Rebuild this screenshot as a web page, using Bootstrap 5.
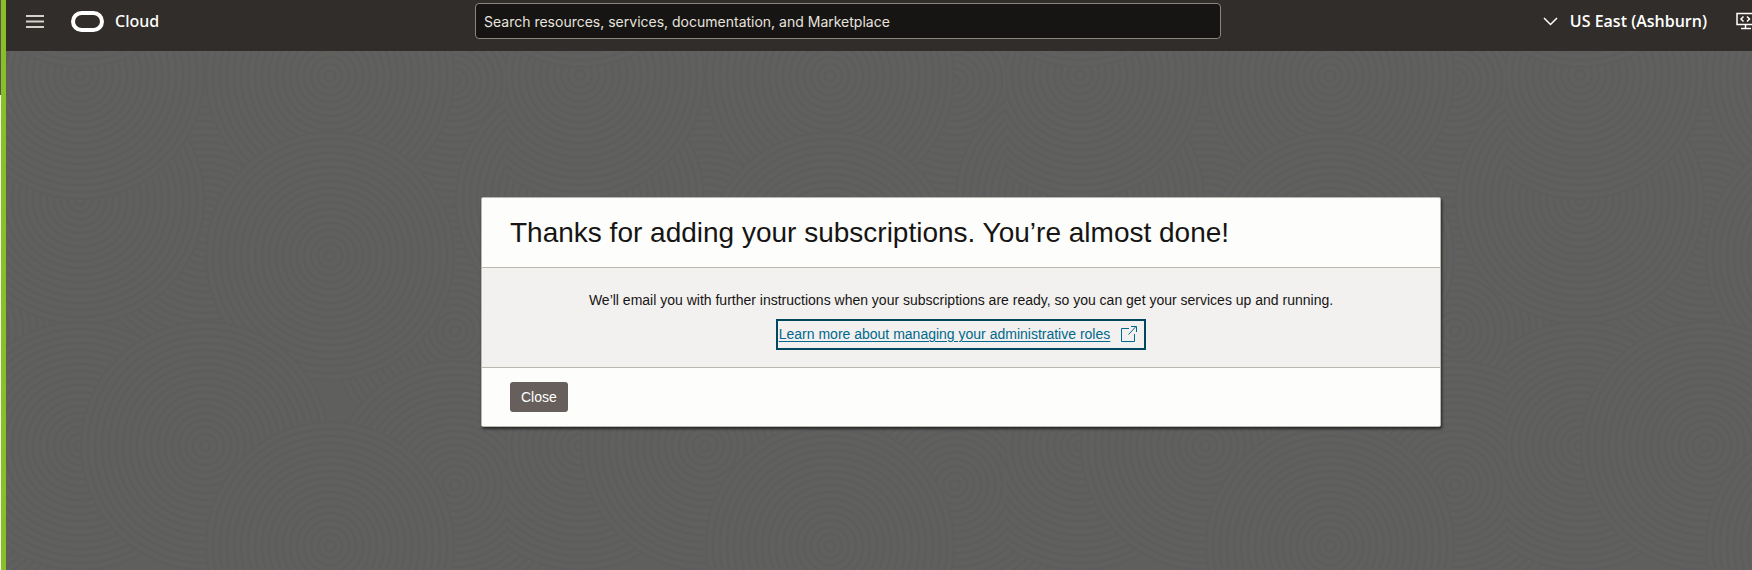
<!DOCTYPE html>
<html lang="en">
<head>
<meta charset="utf-8">
<meta name="viewport" content="width=device-width, initial-scale=1">
<title>Cloud</title>
<link href="https://cdn.jsdelivr.net/npm/bootstrap@5.3.0/dist/css/bootstrap.min.css" rel="stylesheet">
<style>
  body { font-family: "Liberation Sans", Arial, sans-serif; font-size: 14px; line-height: 20px; color: #161513; background: #605f5e; }
  .edge-strip { width: 6px; background: linear-gradient(90deg, transparent 1px, #8abf26 1px), linear-gradient(#55535a 95px, #f4f2f5 95px); }
  .console { min-width: 0; }
  .topbar { height: 51px; padding-bottom: 9px; background: #312d2a; display: grid; grid-template-columns: 469fr 746fr 531fr; font-family: "Noto Sans", sans-serif; font-size: 16px; color: #fff; }
  .topbar button { color: inherit; background: none; border: 0; padding: 0; }
  .brand-area { padding-left: 20px; gap: 27px; }
  .brand { color: #fff; font-weight: 500; gap: 11px; }
  .search { height: 36px; padding: 0 8px; font: 400 14px/20px Inter, sans-serif; color: #e6e3df; background: #161513; border: 1px solid #8b8580; border-radius: 4px; }
  .search::placeholder { color: #e6e3df; opacity: 1; }
  .search:focus { color: #fff; background: #161513; }
  .region { font-family: "Open Sans", sans-serif; font-weight: 600; gap: 12px; }
  .tools-area { gap: 29px; }
  .stage { padding: 146px 0 40px; display: grid; grid-template-columns: 475fr minmax(0, 960px) 311fr; isolation: isolate; }
  .backdrop-art { z-index: -1; }
  .dialog { grid-column: 2; background: #fdfdfc; border: 1px solid #bcb6b1; border-radius: 2px; box-shadow: 1px 2px 3px rgba(0,0,0,.6); }
  .dialog-head { padding: 16px 28px; border-bottom: 1px solid #bcb6b1; }
  .dialog-head h1 { font-size: 28px; line-height: 37px; font-weight: 400; }
  .dialog-text { padding: 22px 28px 17px; gap: 9px; background: #f3f1f0; border-bottom: 1px solid #bcb6b1; }
  .learn-more { color: #00688c; border: 2px solid #00485f; padding: 3px 7px 4px 1px; gap: 11px; line-height: 20px; text-decoration: none; }
  .learn-more span { text-decoration: underline; text-underline-offset: 2px; }
  .dialog-foot { padding: 14px 28px; }
  .btn-close-dialog { display: block; padding: 5px 11px; font-size: 14px; line-height: 20px; color: #fff; background: #665f5b; border: 0; border-radius: 3px; }
  .btn-close-dialog:hover { color: #fff; background: #4f4945; }
</style>
</head>
<body>
<div class="d-flex min-vh-100">
  <div class="edge-strip flex-shrink-0"></div>
  <div class="console d-flex flex-column flex-grow-1">
    <header class="topbar">
      <div class="brand-area d-flex align-items-center">
        <button type="button" class="d-flex" aria-label="Navigation menu">
          <svg width="18" height="14" viewBox="0 0 18 14" stroke="#d4d0cb" stroke-width="2"><path d="M0 2h18M0 7.500h18M0 13h18"/></svg>
        </button>
        <a href="#" class="brand d-flex align-items-center text-decoration-none">
          <svg width="33" height="21" viewBox="0 0 33 21" fill="none" stroke="#fff" stroke-width="4"><rect x="2" y="2" width="29" height="17" rx="8.500"/></svg>
          <span>Cloud</span>
        </a>
      </div>
      <div class="d-flex align-items-center">
        <input type="search" class="search form-control w-100" aria-label="Search" placeholder="Search resources, services, documentation, and Marketplace">
      </div>
      <div class="tools-area d-flex align-items-center justify-content-end">
        <button type="button" class="region d-flex align-items-center">
          <svg width="15" height="9" viewBox="0 0 15 9" fill="none" stroke="#fff" stroke-width="1.500"><path d="M1 1l6.500 6.500L14 1"/></svg>
          <span>US East (Ashburn)</span>
        </button>
        <button type="button" class="d-flex" aria-label="Developer tools">
          <svg width="16" height="18" viewBox="0 0 16 18" fill="none" stroke="#fff" stroke-width="1.500"><path d="M19 1.500H1v11h18M9.500 12.500v4M5 16.500h10M7.500 4.500L5 7l2.500 2.500M11 4.500L13.500 7 11 9.500"/></svg>
        </button>
      </div>
    </header>

    <main class="stage position-relative flex-grow-1 align-items-start overflow-hidden">
      <svg class="backdrop-art position-absolute top-0 start-0 w-100 h-100" aria-hidden="true">
        <defs>
          <radialGradient id="rings" r=".028" spreadMethod="repeat">
            <stop offset="0" stop-color="#60605e"/>
            <stop offset=".4" stop-color="#60605e"/>
            <stop offset=".75" stop-color="#5c5c5d"/>
            <stop offset="1" stop-color="#60605e"/>
          </radialGradient>
          <circle id="disc" r="125" fill="url(#rings)"/>
          <pattern id="sand" width="500" height="620" patternUnits="userSpaceOnUse">
            <rect width="500" height="620" fill="#5f5f5e"/>
            <use href="#disc" x="199" y="180"/>
            <use href="#disc" x="-51" y="280"/><use href="#disc" x="449" y="280"/>
            <use href="#disc" x="449" y="434"/><use href="#disc" x="-51" y="434"/>
            <use href="#disc" x="449" y="30"/><use href="#disc" x="-51" y="30"/>
            <use href="#disc" x="324" y="25"/>
            <use href="#disc" x="74" y="149"/><use href="#disc" x="574" y="149"/>
            <use href="#disc" x="74" y="24"/>
            <use href="#disc" x="324" y="205"/>
            <use href="#disc" x="74" y="395"/>
            <use href="#disc" x="199" y="395"/>
            <use href="#disc" x="324" y="495"/>
            <use href="#disc" x="74" y="-108"/>
          </pattern>
        </defs>
        <rect width="100%" height="100%" fill="url(#sand)"/>
      </svg>
      <section class="dialog" role="dialog" aria-labelledby="dialog-title">
        <div class="dialog-head"><h1 id="dialog-title" class="mb-0">Thanks for adding your subscriptions. You’re almost done!</h1></div>
        <div class="dialog-text d-flex flex-column align-items-center text-center">
          <p class="mb-0">We’ll email you with further instructions when your subscriptions are ready, so you can get your services up and running.</p>
          <a href="#" class="learn-more d-inline-flex align-items-center">
            <span>Learn more about managing your administrative roles</span>
            <svg width="16" height="16" viewBox="0 0 16 16" fill="none" stroke="#00688c"><path d="M8 2.500H.5v13h13V8M7.500 8.500l7.500-8M10 .500h5.500V6"/></svg>
          </a>
        </div>
        <div class="dialog-foot"><button type="button" class="btn btn-close-dialog">Close</button></div>
      </section>
    </main>
  </div>
</div>
<script src="https://cdn.jsdelivr.net/npm/bootstrap@5.3.0/dist/js/bootstrap.bundle.min.js"></script>
</body>
</html>
